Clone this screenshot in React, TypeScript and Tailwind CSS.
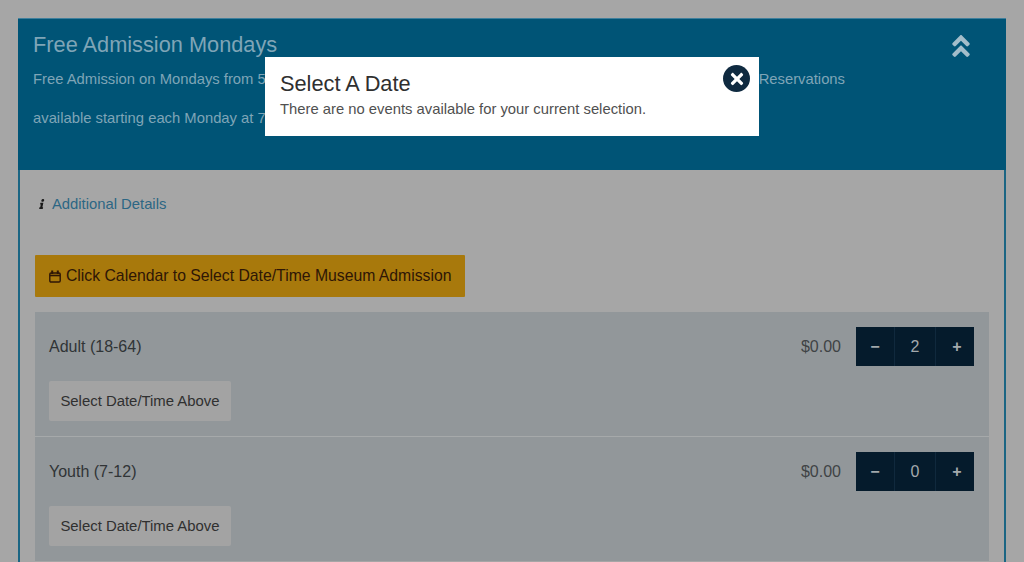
import React from "react";
import { FaAngleDoubleUp, FaInfo, FaTimes } from "react-icons/fa";

interface TicketRowProps {
  label: string;
  price: string;
  quantity: number;
}

function TicketRow({ label, price, quantity }: TicketRowProps) {
  return (
    <div className="h-[124px] shrink-0 bg-[#92979a] pl-[14px] pr-[15px] pt-[15px]">
      <div className="flex h-[39px] items-center justify-between">
        <span className="text-[16px] text-[#303436]">{label}</span>
        <div className="flex items-center">
          <span className="mr-[15px] text-[16px] text-[#3f4345]">{price}</span>
          <div className="flex h-[39px] w-[118px] bg-[#051b2c] text-[#a3a9ac]">
            <span className="flex w-[39px] items-center justify-center border-r border-[#10293d] text-[16px] font-bold">
              −
            </span>
            <span className="flex w-[41px] items-center justify-center border-r border-[#10293d] text-[16px]">
              {quantity}
            </span>
            <span className="flex w-[38px] items-center justify-center pl-[4px] text-[16px] font-bold">
              +
            </span>
          </div>
        </div>
      </div>
      <button className="mt-[15px] block h-[40px] w-[182px] rounded-[2px] bg-[#a3a3a3] text-center text-[14.9px] text-[#303030]">
        Select Date/Time Above
      </button>
    </div>
  );
}

export default function App() {
  return (
    <div className="relative h-[562px] w-[1024px] overflow-hidden bg-[#a6a6a6] pl-[18px] pr-[18px] pt-[18px] font-['Liberation_Sans',Arial,sans-serif]">
      <div className="flex h-[152px] border-t border-[#3f7f9c] bg-[#005476] pl-[15px] pt-[14px] text-[#7fa5b7]">
        <div className="w-[812px] shrink-0">
          <h1 className="text-[21.75px] leading-[24px]">Free Admission Mondays</h1>
          <div className="mt-[10px] flex justify-between text-[14.8px] leading-[24px]">
            <span>Free Admission on Mondays from 5</span>
            <span>Reservations</span>
          </div>
          <p className="mt-[15px] text-[14.8px] leading-[24px]">
            available starting each Monday at 7
          </p>
        </div>
        <FaAngleDoubleUp className="ml-[104px] mt-[-1px] h-[28px] w-[24px] shrink-0 text-[#a3bdca]" />
      </div>

      <div className="h-[392px] border-l-2 border-r-2 border-[#1a6583] pl-[15px] pr-[15px]">
        <div className="flex h-[85px] items-start pt-[23px]">
          <FaInfo className="ml-[2px] mt-[6px] h-[10px] w-[10px] -skew-x-12 text-[#1a1a1a]" />
          <a className="ml-[5px] text-[14.8px] leading-[22px] text-[#2c6684]">Additional Details</a>
        </div>
        <button className="flex h-[42px] w-[430px] items-center rounded-[1px] bg-[#a8790c] pl-[14px] text-[15.75px] text-[#2e1606]">
          <svg viewBox="0 0 12 13" className="mr-[5px] h-[13px] w-[12px]" fill="none" stroke="currentColor">
            <rect x="0.8" y="3" width="10.4" height="9" rx="1.2" strokeWidth="1.4" />
            <path d="M1 5.5h10" strokeWidth="1.6" />
            <path d="M3.2 0.5v3.5M8.8 0.5v3.5" strokeWidth="2" />
          </svg>
          Click Calendar to Select Date/Time Museum Admission
        </button>
        <div className="mt-[15px] flex w-[954px] flex-col gap-px bg-[#a6a9aa]">
          <TicketRow label="Adult (18-64)" price="$0.00" quantity={2} />
          <TicketRow label="Youth (7-12)" price="$0.00" quantity={0} />
        </div>
      </div>

      <div className="absolute left-[265px] top-[57px] h-[79px] w-[494px] bg-white pl-[15px] pt-[15px]">
        <h2 className="text-[21.75px] leading-[24px] text-[#2f2f2f]">Select A Date</h2>
        <p className="mt-[1px] text-[14.8px] leading-[24px] text-[#505050]">
          There are no events available for your current selection.
        </p>
        <button className="absolute left-[458px] top-[8px] flex h-[27px] w-[27px] items-center justify-center rounded-full bg-[#0f2a40] text-white">
          <FaTimes className="h-[18px] w-[18px]" />
        </button>
      </div>
    </div>
  );
}
